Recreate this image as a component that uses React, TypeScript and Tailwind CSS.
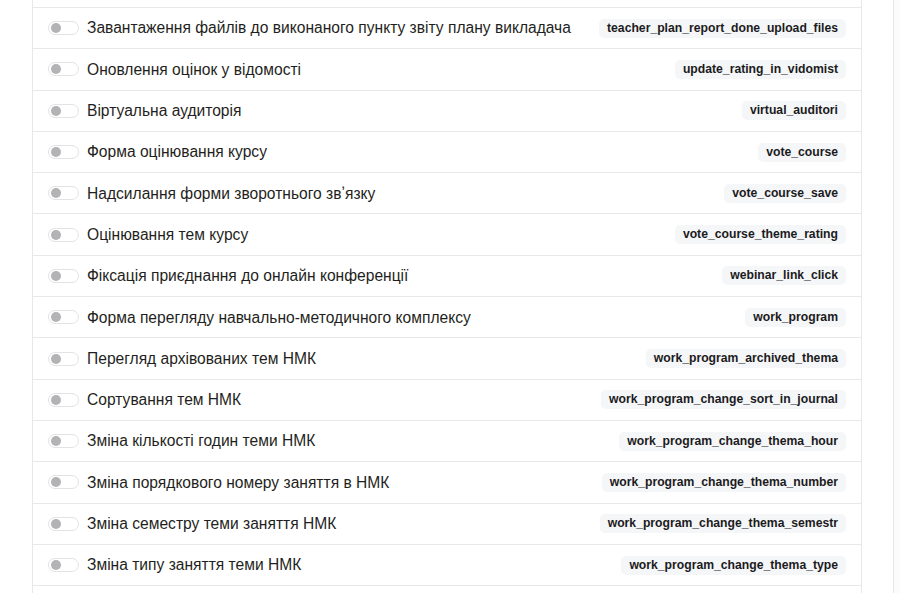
import React from 'react';

interface Permission {
  title: string;
  code: string;
}

const permissions: Permission[] = [
  { title: 'Завантаження файлів до виконаного пункту звіту плану викладача', code: 'teacher_plan_report_done_upload_files' },
  { title: 'Оновлення оцінок у відомості', code: 'update_rating_in_vidomist' },
  { title: 'Віртуальна аудиторія', code: 'virtual_auditori' },
  { title: 'Форма оцінювання курсу', code: 'vote_course' },
  { title: 'Надсилання форми зворотнього звʼязку', code: 'vote_course_save' },
  { title: 'Оцінювання тем курсу', code: 'vote_course_theme_rating' },
  { title: 'Фіксація приєднання до онлайн конференції', code: 'webinar_link_click' },
  { title: 'Форма перегляду навчально-методичного комплексу', code: 'work_program' },
  { title: 'Перегляд архівованих тем НМК', code: 'work_program_archived_thema' },
  { title: 'Сортування тем НМК', code: 'work_program_change_sort_in_journal' },
  { title: 'Зміна кількості годин теми НМК', code: 'work_program_change_thema_hour' },
  { title: 'Зміна порядкового номеру заняття в НМК', code: 'work_program_change_thema_number' },
  { title: 'Зміна семестру теми заняття НМК', code: 'work_program_change_thema_semestr' },
  { title: 'Зміна типу заняття теми НМК', code: 'work_program_change_thema_type' },
];

function Toggle() {
  return (
    <span className="flex h-[14px] w-[31px] shrink-0 items-center rounded-full border border-[#e3e3e6] bg-white px-[2px]">
      <span className="h-[10px] w-[10px] rounded-full bg-[#b3b3b6]" />
    </span>
  );
}

function Row({ item }: { item: Permission }) {
  return (
    <div className="flex h-[41.3px] items-center border-b border-[#e8e8ec] pl-[15px] pr-[15px]">
      <Toggle />
      <span className="ml-[8px] flex-1 truncate text-[15.6px] text-[#1f1f22]">{item.title}</span>
      <span className="rounded-[5px] bg-[#f5f6f8] px-[8px] py-[2px] text-[12.2px] font-bold leading-[15px] text-[#1b1b1d]">
        {item.code}
      </span>
    </div>
  );
}

export default function App() {
  return (
    <div
      className="h-[593px] w-[900px] overflow-hidden bg-[#fbfbfc]"
      style={{ fontFamily: '"Liberation Sans", Arial, sans-serif' }}
    >
      <div className="h-full w-[894px] border-r border-[#e8e8ec] bg-white pl-[32px] pr-[31px]">
        <div className="h-full border-l border-r border-[#e8e8ec] pt-[7px]">
          <div className="border-t border-[#e8e8ec]">
            {permissions.map((p) => (
              <Row key={p.code} item={p} />
            ))}
            <div className="h-[41.3px]" />
          </div>
        </div>
      </div>
    </div>
  );
}
